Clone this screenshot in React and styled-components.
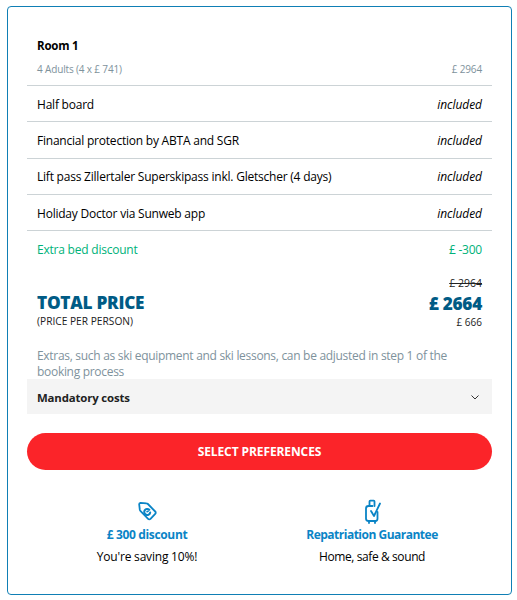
import React from 'react';
import styled, { createGlobalStyle } from 'styled-components';

const GlobalStyle = createGlobalStyle`
  html, body { margin: 0; padding: 0; background: #fff; }
  body { font-family: "Open Sans", "Noto Sans", sans-serif; color: #000; }
`;

const Page = styled.div`
  padding: 6px 5px 5px 7px;
`;

const Card = styled.div`
  box-sizing: border-box;
  width: 505px;
  height: 589px;
  border: 1px solid #0f7fb5;
  border-radius: 4px;
  padding: 30px 19px 0;
`;

const RoomHead = styled.div`
  padding: 0 0 8px;
  border-bottom: 1px solid #ccd3d6;
`;

const RoomTitle = styled.div`
  padding-left: 10px;
  font-size: 11.5px;
  line-height: 17px;
  font-weight: 700;
  letter-spacing: -0.2px;
  margin-bottom: 7px;
`;

const RoomSub = styled.div`
  display: flex;
  justify-content: space-between;
  padding: 0 10px;
  font-size: 10px;
  line-height: 16px;
  letter-spacing: -0.15px;
  color: #7e929c;
`;

const Row = styled.div`
  display: flex;
  justify-content: space-between;
  align-items: center;
  box-sizing: border-box;
  height: 36.3px;
  padding: 1px 10px 0;
  font-size: 12px;
  letter-spacing: -0.22px;
  color: ${p => (p.$green ? '#00b27a' : '#000')};
  border-bottom: ${p => (p.$green ? 'none' : '1px solid #ccd3d6')};
`;

const Included = styled.span`
  font-style: italic;
  letter-spacing: -0.05px;
`;

const Totals = styled.div`
  display: flex;
  justify-content: space-between;
  padding: 8px 10px 0;
`;

const TotalLeft = styled.div`
  padding-top: 17px;
`;

const TotalTitle = styled.div`
  font-size: 17.2px;
  line-height: 22px;
  font-weight: 800;
  letter-spacing: -0.25px;
  color: #005b85;
`;

const PerPerson = styled.div`
  font-size: 10.2px;
  line-height: 14px;
  color: #222;
`;

const TotalRight = styled.div`
  text-align: right;
`;

const OldPrice = styled.div`
  font-size: 10.5px;
  line-height: 16px;
  color: #222;
  text-decoration: line-through;
`;

const BigPrice = styled.div`
  padding-top: 1px;
  font-size: 17.2px;
  line-height: 24px;
  font-weight: 800;
  letter-spacing: -0.25px;
  color: #005b85;
`;

const SmallPrice = styled.div`
  margin-top: -1px;
  font-size: 10px;
  line-height: 14px;
  color: #222;
`;

const Note = styled.p`
  margin: 19px 0 -1px;
  padding: 0 10px;
  font-size: 12px;
  line-height: 16px;
  letter-spacing: -0.3px;
  color: #7e929c;
`;

const Mandatory = styled.div`
  display: flex;
  justify-content: space-between;
  align-items: center;
  box-sizing: border-box;
  height: 35px;
  padding: 1px 13px 0 10px;
  background: #f4f4f4;
  font-size: 11.4px;
  font-weight: 700;
  letter-spacing: -0.15px;
  color: #222;
`;

const Cta = styled.button`
  display: block;
  width: 100%;
  height: 37px;
  margin-top: 19px;
  border: none;
  border-radius: 19px;
  background: #fb2429;
  color: #fff;
  font-family: inherit;
  font-size: 12px;
  font-weight: 700;
  letter-spacing: -0.1px;
`;

const Perks = styled.div`
  display: grid;
  grid-template-columns: 240px 210px;
  margin-top: 29px;
`;

const Perk = styled.div`
  display: flex;
  flex-direction: column;
  align-items: center;
  font-size: 12px;
`;

const PerkIcon = styled.svg`
  display: block;
  width: 20px;
  height: 25px;
  fill: none;
  stroke: #0a84c6;
  stroke-width: 1.8;
  stroke-linecap: round;
  stroke-linejoin: round;
`;

const PerkTitle = styled.div`
  margin-top: 2px;
  font-weight: 700;
  line-height: 17px;
  letter-spacing: ${p => p.$tight ? '-0.5px' : '-0.35px'};
  color: #0a84c6;
`;

const PerkText = styled.div`
  margin-top: 5px;
  line-height: 17px;
  letter-spacing: ${p => p.$tight ? '-0.4px' : '-0.2px'};
`;

const rows = [
  'Half board',
  'Financial protection by ABTA and SGR',
  'Lift pass Zillertaler Superskipass inkl. Gletscher (4 days)',
  'Holiday Doctor via Sunweb app',
];

export default function App() {
  return (
    <Page>
      <GlobalStyle />
      <Card>
        <RoomHead>
          <RoomTitle>Room 1</RoomTitle>
          <RoomSub>
            <span>4 Adults (4 x £ 741)</span>
            <span>£ 2964</span>
          </RoomSub>
        </RoomHead>
        {rows.map(label => (
          <Row key={label}>
            <span>{label}</span>
            <Included>included</Included>
          </Row>
        ))}
        <Row $green>
          <span>Extra bed discount</span>
          <span>£ -300</span>
        </Row>
        <Totals>
          <TotalLeft>
            <TotalTitle>TOTAL PRICE</TotalTitle>
            <PerPerson>(PRICE PER PERSON)</PerPerson>
          </TotalLeft>
          <TotalRight>
            <OldPrice>£ 2964</OldPrice>
            <BigPrice>£ 2664</BigPrice>
            <SmallPrice>£ 666</SmallPrice>
          </TotalRight>
        </Totals>
        <Note>Extras, such as ski equipment and ski lessons, can be adjusted in step 1 of the booking process</Note>
        <Mandatory>
          <span>Mandatory costs</span>
          <svg width="8" height="5" viewBox="0 0 8 5" fill="none" stroke="#333" strokeWidth="1">
            <path d="M.5.5L4 4 7.500.5" />
          </svg>
        </Mandatory>
        <Cta>SELECT PREFERENCES</Cta>
        <Perks>
          <Perk>
            <PerkIcon viewBox="0 0 20 25">
              <path d="M3.500 3.800l6 .5c.6 0 1 .3 1.400.7l7.300 7.500c.7.700.7 1.700 0 2.400l-4.700 5c-.7.700-1.700.700-2.400 0l-7.500-7.700c-.4-.4-.7-.9-.8-1.500l-.6-5.200c-.1-.9.400-1.500 1.300-1.700z" />
              <path d="M12.300 10.800a3 3 0 1 0 .9 2.700" strokeWidth="2" />
              <path d="M10 12.700l1.200-.6" strokeWidth="1.600" />
            </PerkIcon>
            <PerkTitle>£ 300 discount</PerkTitle>
            <PerkText>You're saving 10%!</PerkText>
          </Perk>
          <Perk>
            <PerkIcon viewBox="0 0 20 25">
              <path d="M7.500 7V2.500c0-.5.3-.8.8-.8h3.400c.5 0 .8.300.8.800V7" />
              <path d="M10.500 7H6.500C5 7 4 8 4 9.500v10C4 21 5 22 6.500 22h7c1.500 0 2-1 2-2.500V13" />
              <path d="M9 12l3 5 6-12.500" />
              <path d="M7 22v2M13 22v2" />
            </PerkIcon>
            <PerkTitle $tight>Repatriation Guarantee</PerkTitle>
            <PerkText $tight>Home, safe &amp; sound</PerkText>
          </Perk>
        </Perks>
      </Card>
    </Page>
  );
}
